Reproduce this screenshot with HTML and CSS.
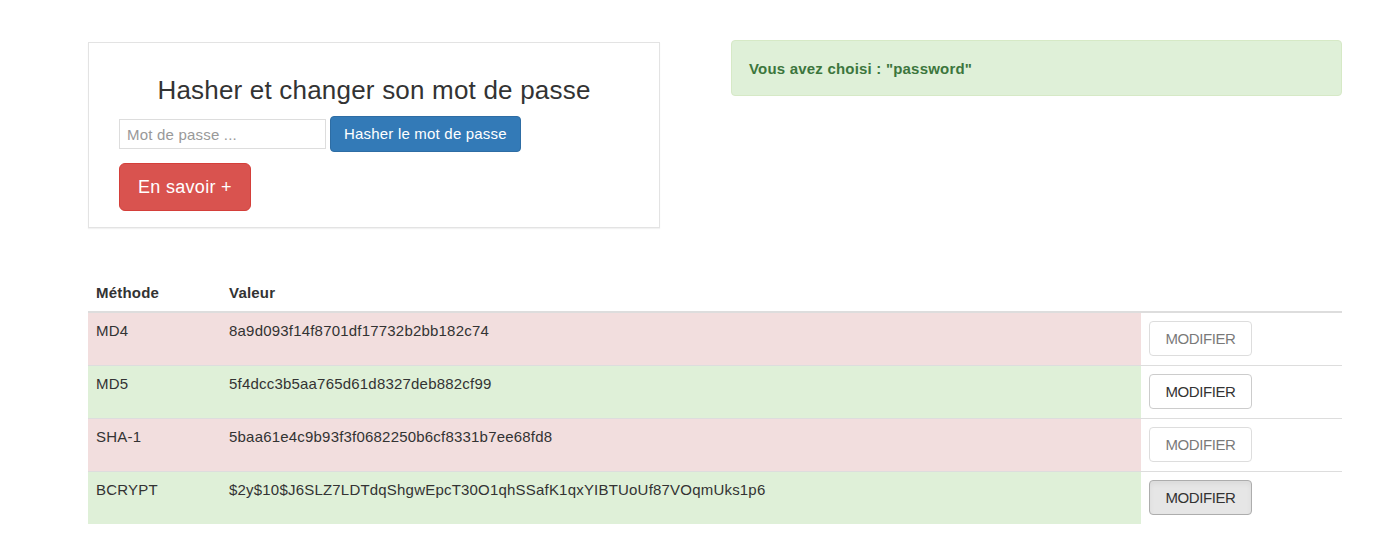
FILE: index.html
```html
<!DOCTYPE html>
<html lang="fr">
<head>
<meta charset="utf-8">
<title>Hash</title>
<link rel="stylesheet" href="styles.css">
</head>
<body>
<div class="page">
  <div class="top">
    <div class="panel">
      <h2 class="title">Hasher et changer son mot de passe</h2>
      <form class="form-row">
        <input class="input" type="text" placeholder="Mot de passe ...">
        <button type="button" class="btn btn-primary">Hasher le mot de passe</button>
      </form>
      <button type="button" class="btn btn-danger btn-lg">En savoir +</button>
    </div>
    <div class="alert">Vous avez choisi : "password"</div>
  </div>
  <table class="table">
    <thead>
      <tr><th class="c-method">Méthode</th><th class="c-value">Valeur</th><th class="c-action"></th></tr>
    </thead>
    <tbody>
      <tr class="danger"><td>MD4</td><td>8a9d093f14f8701df17732b2bb182c74</td><td class="c-action"><button type="button" class="btn btn-default" disabled>MODIFIER</button></td></tr>
      <tr class="success"><td>MD5</td><td>5f4dcc3b5aa765d61d8327deb882cf99</td><td class="c-action"><button type="button" class="btn btn-default">MODIFIER</button></td></tr>
      <tr class="danger"><td>SHA-1</td><td>5baa61e4c9b93f3f0682250b6cf8331b7ee68fd8</td><td class="c-action"><button type="button" class="btn btn-default" disabled>MODIFIER</button></td></tr>
      <tr class="success"><td>BCRYPT</td><td>$2y$10$J6SLZ7LDTdqShgwEpcT30O1qhSSafK1qxYIBTUoUf87VOqmUks1p6</td><td class="c-action"><button type="button" class="btn btn-default active">MODIFIER</button></td></tr>
    </tbody>
  </table>
</div>
</body>
</html>
```

FILE: styles.css
```css
* { box-sizing: border-box; }
html, body { margin: 0; padding: 0; background: #fff; }
body {
  font-family: "Liberation Sans", Arial, Helvetica, sans-serif;
  font-size: 15px;
  letter-spacing: 0.2px;
  line-height: 20px;
  color: #333;
}
.page {
  padding: 40px 56px 0 88px;
}
.top {
  display: flex;
  align-items: flex-start;
  gap: 71px;
}
.panel {
  width: 572px;
  height: 186px;
  margin-top: 2px;
  border: 1px solid #e3e3e3;
  box-shadow: 0 1px 1px rgba(0,0,0,.05);
  padding: 32px 30px 0 30px;
}
.title {
  margin: 0 0 11px 0;
  font-size: 26px;
  line-height: 30px;
  letter-spacing: 0.2px;
  font-weight: 400;
  text-align: center;
  color: #333;
}
.form-row {
  display: flex;
  align-items: center;
  gap: 4px;
  margin: 0 0 11px 0;
}
.input {
  width: 207px;
  height: 30px;
  border: 1px solid #ddd;
  padding: 4px 7px;
  font-family: inherit;
  font-size: 15px;
  letter-spacing: 0.2px;
  color: #555;
  background: #fff;
  outline: none;
}
.input::placeholder { color: #999; }
.btn {
  display: inline-block;
  font-family: inherit;
  font-size: 15px;
  letter-spacing: 0.2px;
  line-height: 20px;
  padding: 6px 12px;
  border: 1px solid transparent;
  border-radius: 4px;
  cursor: pointer;
  text-align: center;
  white-space: nowrap;
}
.btn-primary {
  background: #337ab7;
  border-color: #2e6da4;
  color: #fff;
  height: 36px;
  padding: 7px 13px;
}
.btn-danger {
  background: #d9534f;
  border-color: #d43f3a;
  color: #fff;
}
.btn-lg {
  font-size: 18px;
  letter-spacing: 0.3px;
  line-height: 24px;
  height: 48px;
  padding: 11px 18px;
  border-radius: 6px;
}
.btn-default {
  background: #fff;
  border-color: #ccc;
  color: #333;
  height: 35px;
  width: 103px;
  padding: 6px 0;
  letter-spacing: -0.4px;
}
.btn-default:disabled {
  opacity: .65;
  cursor: not-allowed;
}
.btn-default.active {
  background: #e6e6e6;
  border-color: #adadad;
  box-shadow: inset 0 3px 5px rgba(0,0,0,.05);
}
.alert {
  width: 611px;
  height: 56px;
  background: #dff0d8;
  border: 1px solid #d6e9c6;
  border-radius: 4px;
  color: #3c763d;
  font-weight: 700;
  padding: 18px 17px;
}
.table {
  width: 1254px;
  margin-top: 47px;
  border-collapse: collapse;
  border-spacing: 0;
}
.table th {
  text-align: left;
  font-weight: 700;
  padding: 8px;
  border-bottom: 2px solid #ddd;
  vertical-align: bottom;
}
.table td {
  padding: 8px 8px 9px 8px;
  vertical-align: top;
  border-top: 1px solid #ddd;
}
.table tbody tr:first-child td { border-top: 0; }
.c-method { width: 133px; }
.c-action { width: 201px; }
.danger td { background: #f2dede; }
.success td { background: #dff0d8; }
.table td.c-action { background: #fff; }
```
